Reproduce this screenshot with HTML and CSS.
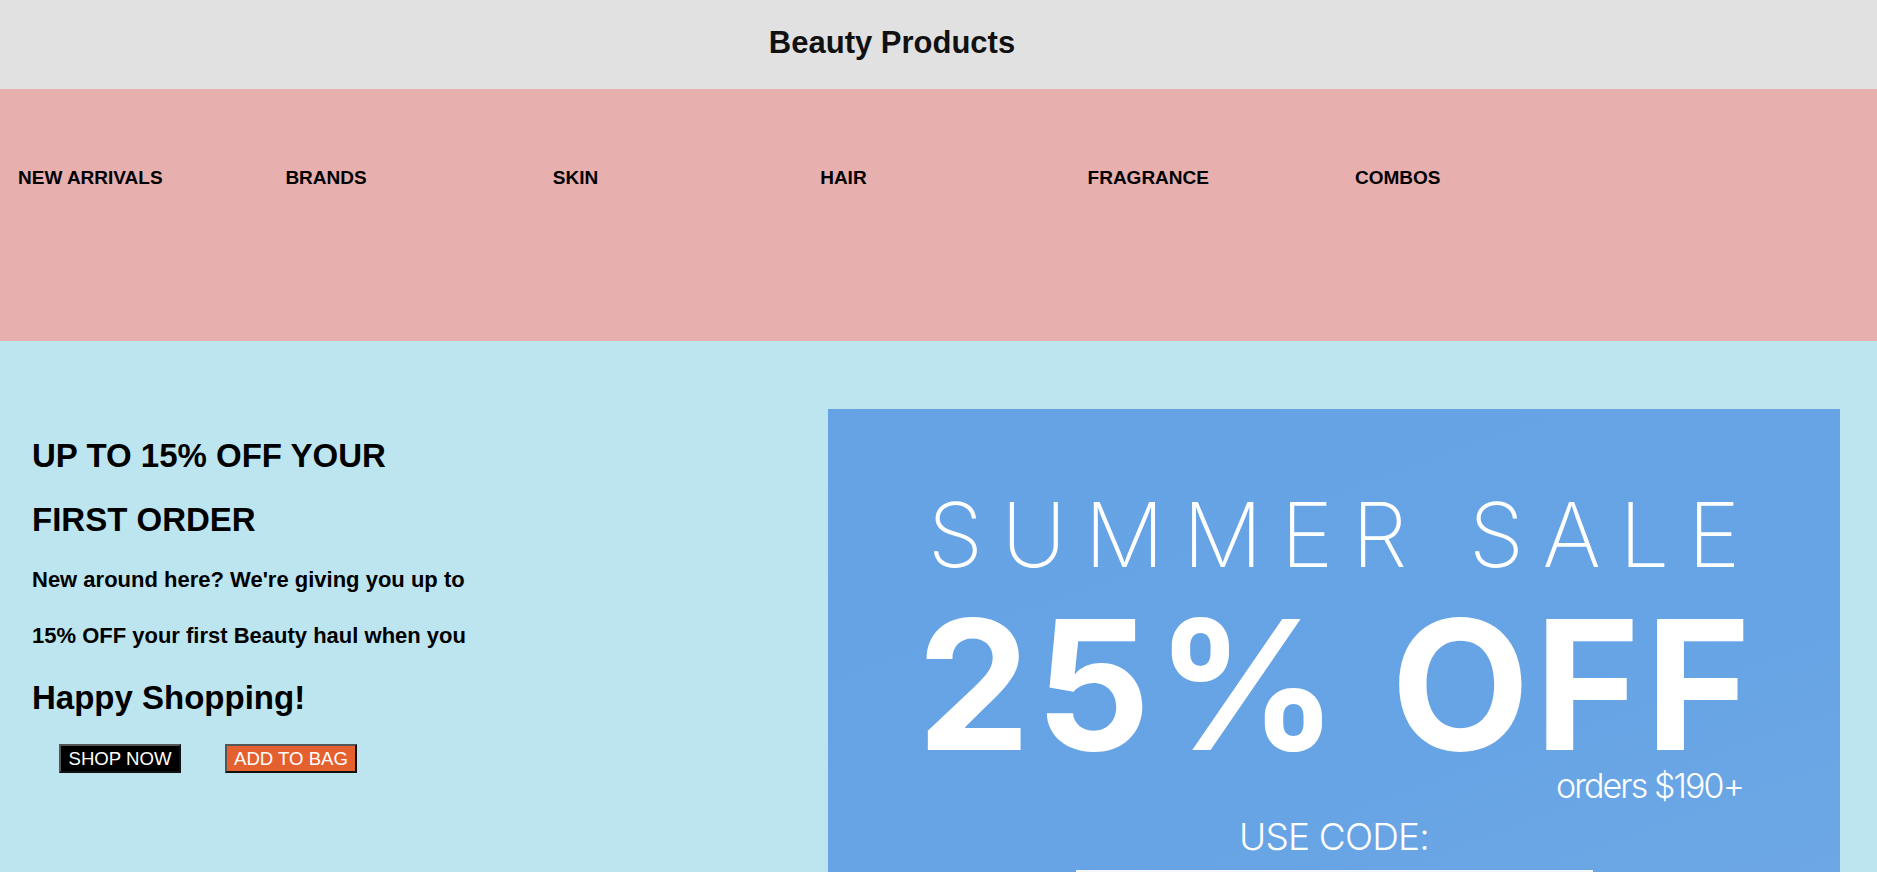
FILE: index.html
```html
<!DOCTYPE html>
<html lang="en">
<head>
<meta charset="utf-8">
<title>Beauty Products</title>
<link rel="stylesheet" href="styles.css">
</head>
<body>
<header class="site-header">
  <h1 class="site-title">Beauty Products</h1>
</header>
<nav class="main-nav">
  <ul class="nav-list">
    <li class="nav-item">NEW ARRIVALS</li>
    <li class="nav-item">BRANDS</li>
    <li class="nav-item">SKIN</li>
    <li class="nav-item">HAIR</li>
    <li class="nav-item">FRAGRANCE</li>
    <li class="nav-item">COMBOS</li>
  </ul>
</nav>
<section class="hero">
  <div class="hero-text">
    <h2 class="hero-title">UP TO 15% OFF YOUR<br>FIRST ORDER</h2>
    <p class="hero-desc">New around here? We're giving you up to<br>15% OFF your first Beauty haul when you</p>
    <h3 class="hero-greet">Happy Shopping!</h3>
    <div class="hero-actions">
      <button class="btn btn-dark">SHOP NOW</button>
      <button class="btn btn-orange">ADD TO BAG</button>
    </div>
  </div>
  <div class="promo">
    <div class="promo-sub">SUMMER SALE</div>
    <div class="promo-big">25% OFF</div>
    <div class="promo-min">orders $190+</div>
    <div class="promo-code">USE CODE:</div>
    <div class="promo-box"></div>
  </div>
</section>
</body>
</html>
```
FILE: styles.css
```css
html, body {
  margin: 0;
  padding: 0;
}
body {
  font-family: "Liberation Sans", Arial, sans-serif;
  color: #000;
  background: #bde5ef;
}
.site-header {
  background: #e1e1e1;
  height: 89px;
  box-sizing: border-box;
  padding: 25px 93px 0 0;
  text-align: center;
}
.site-title {
  margin: 0;
  font-size: 31px;
  font-weight: bold;
  line-height: 35px;
  color: #111;
}
.main-nav {
  background: #e8afaf;
  height: 252px;
  box-sizing: border-box;
  padding: 78px 0 0 18px;
}
.nav-list {
  list-style: none;
  margin: 0;
  padding: 0;
  display: grid;
  grid-template-columns: repeat(6, 267.4px);
}
.nav-item {
  font-size: 19px;
  font-weight: bold;
  line-height: 22px;
}
.hero {
  display: flex;
  align-items: flex-start;
  padding: 68px 37px 0 32px;
  background: #bde5ef;
}
.hero-text {
  flex: 1;
  padding-top: 15px;
}
.hero-title {
  margin: 0;
  font-size: 33px;
  line-height: 64px;
  font-weight: bold;
}
.hero-desc {
  margin: 0;
  font-size: 22px;
  line-height: 56px;
  font-weight: bold;
  white-space: nowrap;
}
.hero-greet {
  margin: 2px 0 0;
  font-size: 33px;
  line-height: 64px;
  font-weight: bold;
}
.hero-actions {
  display: flex;
  gap: 44px;
  margin: 14px 0 0 27px;
}
.btn {
  font-family: "Liberation Sans", Arial, sans-serif;
  font-size: 18.6px;
  line-height: 21px;
  padding: 2px 6px;
  border: 2px solid;
  border-color: #555 #111 #111 #555;
  color: #fff;
  cursor: pointer;
}
.btn-dark {
  background: #000;
  width: 122px;
}
.btn-orange {
  background: #e5602f;
  width: 132px;
}
.promo {
  width: 1012px;
  height: 560px;
  flex: none;
  background: linear-gradient(160deg, #66a3e4 0%, #67a4e5 60%, #6fa9e4 100%);
  color: #fff;
  font-family: Inter, "Open Sans", sans-serif;
  display: flex;
  flex-direction: column;
  align-items: center;
  box-sizing: border-box;
  padding-top: 81px;
}
.promo-sub {
  font-size: 89px;
  line-height: 1;
  font-weight: 200;
  letter-spacing: 18.3px;
  padding-left: 18.3px;
}
.promo-big {
  font-size: 180px;
  line-height: 0.9;
  font-weight: 700;
  margin-top: 25px;
  letter-spacing: 5px;
  padding-left: 5px;
}
.promo-min {
  align-self: flex-end;
  margin: 3px 97px 0 0;
  font-size: 34px;
  line-height: 1;
  font-weight: 300;
  letter-spacing: -1.9px;
}
.promo-code {
  margin-top: 15px;
  font-size: 37px;
  line-height: 1;
  font-weight: 300;
  letter-spacing: -0.8px;
}
.promo-box {
  margin-top: 15px;
  width: 517px;
  height: 60px;
  background: #f4f8fd;
}
```
